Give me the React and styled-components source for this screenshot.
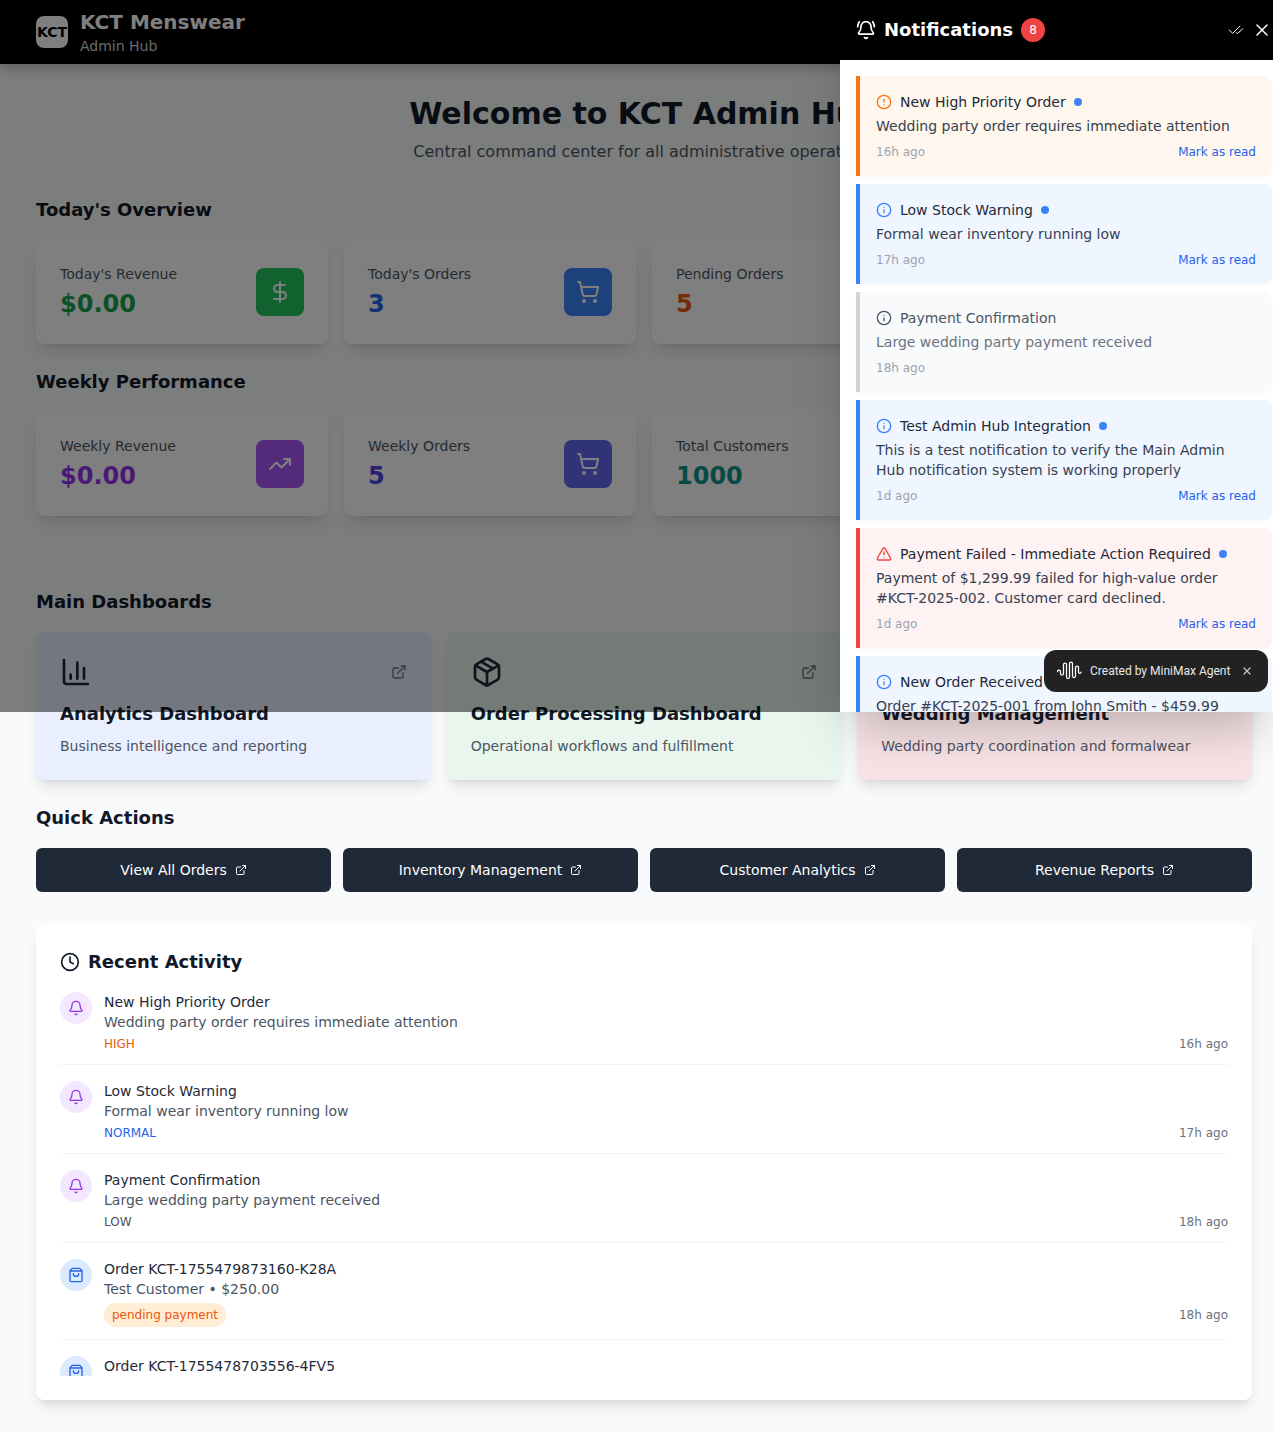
import React from 'react'
import styled, { createGlobalStyle } from 'styled-components'
import {
  Bell,
  BellRing,
  ChartColumn,
  CheckCheck,
  CircleAlert,
  Clock,
  DollarSign,
  ExternalLink,
  Heart,
  Info,
  Package,
  ShoppingBag,
  ShoppingCart,
  TrendingUp,
  TriangleAlert,
  X,
} from 'lucide-react'

const GlobalStyle = createGlobalStyle`
  html, body {
    margin: 0;
    padding: 0;
    background: #f9fafb;
    font-family: "DejaVu Sans", sans-serif;
  }
  * { box-sizing: border-box; }
`

const Page = styled.div`
  position: relative;
  width: 1273px;
  height: 1432px;
  overflow: hidden;
  background: #f9fafb;
`
const Header = styled.header`
  height: 64px;
  padding: 8px 36px;
  background: #000000;
  display: flex;
  align-items: center;
  gap: 12px;
  box-shadow: 0 4px 12px rgba(0, 0, 0, 0.25);
`
const Logo = styled.div`
  width: 32px;
  height: 32px;
  border-radius: 8px;
  background: #ffffff;
  color: #000000;
  font-size: 14px;
  font-weight: 700;
  display: flex;
  align-items: center;
  justify-content: center;
`
const Brand = styled.div`
  color: #ffffff;
  font-size: 20px;
  line-height: 28px;
  font-weight: 700;
`
const BrandSub = styled.div`
  color: #d1d5db;
  font-size: 14px;
  line-height: 20px;
`
const Main = styled.main`
  padding: 32px 21px 32px 36px;
`
const Hero = styled.div`
  text-align: center;
  margin-bottom: 32px;
`
const HeroTitle = styled.h1`
  margin: 0 0 8px;
  font-size: 30px;
  line-height: 36px;
  font-weight: 700;
  color: #111827;
`
const HeroSub = styled.p`
  margin: 0;
  font-size: 16px;
  line-height: 24px;
  color: #4b5563;
`
const SectionTitle = styled.h2`
  margin: 0 0 16px;
  font-size: 18px;
  line-height: 28px;
  font-weight: 700;
  color: #111827;
`
const StatGrid = styled.div`
  display: grid;
  grid-template-columns: repeat(4, 1fr);
  gap: 16px;
  margin-bottom: ${p => p.$bottom}px;
`
const StatCard = styled.div`
  height: 104px;
  padding: 24px;
  border-radius: 8px;
  background: #ffffff;
  box-shadow: 0 10px 15px -3px rgba(0, 0, 0, 0.1), 0 4px 6px -4px rgba(0, 0, 0, 0.1);
  display: flex;
  justify-content: space-between;
  align-items: center;
`
const StatLabel = styled.div`
  font-size: 14px;
  line-height: 20px;
  color: #4b5563;
`
const StatValue = styled.div`
  margin-top: 4px;
  font-size: 24px;
  line-height: 32px;
  font-weight: 700;
  color: ${p => p.$color};
`
const StatIcon = styled.div`
  width: 48px;
  height: 48px;
  border-radius: 8px;
  background: ${p => p.$bg};
  color: #ffffff;
  display: flex;
  align-items: center;
  justify-content: center;
`
const DashGrid = styled.div`
  display: grid;
  grid-template-columns: repeat(3, 1fr);
  gap: 16px;
  margin-bottom: 24px;
`
const DashCard = styled.div`
  height: 148px;
  padding: 24px;
  border-radius: 8px;
  background: ${p => p.$bg};
  box-shadow: 0 10px 15px -3px rgba(0, 0, 0, 0.1), 0 4px 6px -4px rgba(0, 0, 0, 0.1);
`
const DashTop = styled.div`
  display: flex;
  justify-content: space-between;
  align-items: center;
  margin-bottom: 12px;
  color: #1f2937;
`
const DashLink = styled.span`
  display: flex;
  color: #6b7280;
`
const DashTitle = styled.h3`
  margin: 0 0 8px;
  font-size: 18px;
  line-height: 28px;
  font-weight: 700;
  color: #111827;
`
const DashText = styled.p`
  margin: 0;
  font-size: 14px;
  line-height: 20px;
  color: #4b5563;
`
const ActionGrid = styled.div`
  display: grid;
  grid-template-columns: repeat(4, 1fr);
  gap: 12px;
  margin-bottom: 32px;
`
const ActionButton = styled.button`
  height: 44px;
  border: 0;
  border-radius: 6px;
  background: #1f2937;
  color: #ffffff;
  font-family: inherit;
  font-size: 14px;
  display: flex;
  align-items: center;
  justify-content: center;
  gap: 8px;
`
const ActivityCard = styled.section`
  height: 476px;
  padding: 24px;
  border-radius: 8px;
  background: #ffffff;
  box-shadow: 0 10px 15px -3px rgba(0, 0, 0, 0.1), 0 4px 6px -4px rgba(0, 0, 0, 0.1);
`
const ActivityHeading = styled.h2`
  margin: 0 0 16px;
  font-size: 18px;
  line-height: 28px;
  font-weight: 700;
  color: #111827;
  display: flex;
  align-items: center;
  gap: 8px;
`
const ActivityList = styled.div`
  height: 384px;
  overflow: hidden;
`
const ActivityRow = styled.div`
  display: flex;
  gap: 12px;
  padding-bottom: 12px;
  margin-bottom: 16px;
  border-bottom: 1px solid #f3f4f6;
`
const ActivityBubble = styled.div`
  flex: none;
  width: 32px;
  height: 32px;
  border-radius: 50%;
  background: ${p => p.$bg};
  color: ${p => p.$color};
  display: flex;
  align-items: center;
  justify-content: center;
`
const ActivityBody = styled.div`
  flex: 1;
`
const ActivityTitle = styled.div`
  font-size: 14px;
  line-height: 20px;
  color: #1f2937;
`
const ActivityText = styled.div`
  font-size: 14px;
  line-height: 20px;
  color: #4b5563;
`
const ActivityMeta = styled.div`
  margin-top: 4px;
  display: flex;
  justify-content: space-between;
  align-items: center;
  font-size: 12px;
  line-height: 16px;
`
const Priority = styled.span`
  color: ${p => p.$color};
`
const StatusPill = styled.span`
  padding: 4px 8px;
  border-radius: 12px;
  background: #ffedd5;
  color: #ea580c;
`
const TimeText = styled.span`
  color: #6b7280;
`
const Overlay = styled.div`
  position: absolute;
  top: 0;
  left: 0;
  right: 0;
  height: 712px;
  background: rgba(0, 0, 0, 0.5);
`
const Panel = styled.aside`
  position: absolute;
  top: 0;
  right: 0;
  width: 433px;
  height: 712px;
  background: #ffffff;
  box-shadow: 0 25px 50px -12px rgba(0, 0, 0, 0.25);
  display: flex;
  flex-direction: column;
`
const PanelHeader = styled.div`
  flex: none;
  height: 60px;
  padding: 0 1px 0 16px;
  background: #000000;
  color: #ffffff;
  display: flex;
  align-items: center;
  justify-content: space-between;
`
const PanelTitle = styled.div`
  display: flex;
  align-items: center;
  gap: 8px;
  font-size: 18px;
  line-height: 28px;
  font-weight: 700;
`
const CountBadge = styled.span`
  width: 24px;
  height: 24px;
  border-radius: 50%;
  background: #ef4444;
  font-size: 12px;
  font-weight: 400;
  display: flex;
  align-items: center;
  justify-content: center;
`
const PanelTools = styled.div`
  display: flex;
  align-items: center;
  gap: 8px;
`
const PanelList = styled.div`
  flex: 1;
  min-height: 0;
  overflow: hidden;
  padding: 16px 0 0 16px;
  display: flex;
  flex-direction: column;
  gap: 8px;
`
const Notice = styled.div`
  flex: none;
  width: 416px;
  padding: 16px;
  border-left: 4px solid ${p => p.$accent};
  border-radius: 0 8px 8px 0;
  background: ${p => p.$bg};
  box-shadow: 0 1px 2px rgba(0, 0, 0, 0.03);
`
const NoticeHead = styled.div`
  display: flex;
  align-items: center;
  gap: 8px;
  margin-bottom: 4px;
  color: ${p => p.$color};
`
const NoticeTitle = styled.span`
  font-size: 14px;
  line-height: 20px;
  color: ${p => (p.$read ? '#4b5563' : '#1f2937')};
`
const UnreadDot = styled.span`
  width: 8px;
  height: 8px;
  border-radius: 50%;
  background: #3b82f6;
`
const NoticeText = styled.p`
  margin: 0 0 8px;
  font-size: 14px;
  line-height: 20px;
  color: ${p => (p.$read ? '#6b7280' : '#374151')};
`
const NoticeFoot = styled.div`
  display: flex;
  justify-content: space-between;
  align-items: center;
  font-size: 12px;
  line-height: 16px;
`
const NoticeTime = styled.span`
  color: #9ca3af;
`
const MarkRead = styled.span`
  color: #2563eb;
`
const AgentBadge = styled.div`
  position: absolute;
  top: 650px;
  left: 1044px;
  width: 224px;
  height: 42px;
  padding: 0 15px 0 13px;
  border-radius: 12px;
  background: #222222;
  color: #ffffff;
  font-family: Roboto, sans-serif;
  font-size: 12px;
  display: flex;
  align-items: center;
`
const AgentLabel = styled.span`
  margin-left: 8px;
  flex: 1;
  color: #e8e8e8;
`
const AgentClose = styled.span`
  display: flex;
  color: #c4c4c4;
`

const todayStats = [
  { label: "Today's Revenue", value: '$0.00', color: '#16a34a', bg: '#22c55e', Icon: DollarSign },
  { label: "Today's Orders", value: '3', color: '#2563eb', bg: '#3b82f6', Icon: ShoppingCart },
  { label: 'Pending Orders', value: '5', color: '#ea580c', bg: '#f97316', Icon: Clock },
]

const weekStats = [
  { label: 'Weekly Revenue', value: '$0.00', color: '#9333ea', bg: '#a855f7', Icon: TrendingUp },
  { label: 'Weekly Orders', value: '5', color: '#4f46e5', bg: '#6366f1', Icon: ShoppingCart },
  { label: 'Total Customers', value: '1000', color: '#0d9488', bg: '#14b8a6', Icon: Heart },
]

const dashboards = [
  { title: 'Analytics Dashboard', text: 'Business intelligence and reporting', bg: '#e9effe', Icon: ChartColumn },
  { title: 'Order Processing Dashboard', text: 'Operational workflows and fulfillment', bg: '#e8f6ee', Icon: Package },
  { title: 'Wedding Management', text: 'Wedding party coordination and formalwear', bg: '#f8e3e6', Icon: Heart },
]

const actions = ['View All Orders', 'Inventory Management', 'Customer Analytics', 'Revenue Reports']

const activity = [
  { title: 'New High Priority Order', text: 'Wedding party order requires immediate attention', tag: 'HIGH', tagColor: '#ea580c', time: '16h ago' },
  { title: 'Low Stock Warning', text: 'Formal wear inventory running low', tag: 'NORMAL', tagColor: '#2563eb', time: '17h ago' },
  { title: 'Payment Confirmation', text: 'Large wedding party payment received', tag: 'LOW', tagColor: '#4b5563', time: '18h ago' },
]

const notices = [
  { title: 'New High Priority Order', text: 'Wedding party order requires immediate attention', time: '16h ago', accent: '#f97316', bg: '#fff7ed', iconColor: '#f97316', Icon: CircleAlert },
  { title: 'Low Stock Warning', text: 'Formal wear inventory running low', time: '17h ago', accent: '#3b82f6', bg: '#eff6ff', iconColor: '#3b82f6', Icon: Info },
  { title: 'Payment Confirmation', text: 'Large wedding party payment received', time: '18h ago', accent: '#d1d5db', bg: '#f9fafb', iconColor: '#4b5563', Icon: Info, read: true },
  { title: 'Test Admin Hub Integration', text: 'This is a test notification to verify the Main Admin Hub notification system is working properly', time: '1d ago', accent: '#3b82f6', bg: '#eff6ff', iconColor: '#3b82f6', Icon: Info },
  { title: 'Payment Failed - Immediate Action Required', text: 'Payment of $1,299.99 failed for high-value order #KCT-2025-002. Customer card declined.', time: '1d ago', accent: '#ef4444', bg: '#fef2f2', iconColor: '#ef4444', Icon: TriangleAlert },
  { title: 'New Order Received', text: 'Order #KCT-2025-001 from John Smith - $459.99', time: '1d ago', accent: '#3b82f6', bg: '#eff6ff', iconColor: '#3b82f6', Icon: Info },
]

const WaveIcon = () => (
  <svg width="25" height="22" viewBox="0 0 25 22" fill="none" stroke="currentColor" strokeWidth="1.25" strokeLinecap="round">
    <path d="M.5 11.500c0-2 3-2 3 0v2c0 2 3 2 3 0V4.500c0-2 3-2 3 0V17c0 2 3 2 3 0V3.500c0-2 3-2 3 0V16c0 2 3 2 3 0V7.500c0-2 3-2 3 0v4.500c0 1.800 2.500 1.800 2.500 0" />
  </svg>
)

const Stats = ({ items, bottom }) => (
  <StatGrid $bottom={bottom}>
    {items.map(({ label, value, color, bg, Icon }) => (
      <StatCard key={label}>
        <div>
          <StatLabel>{label}</StatLabel>
          <StatValue $color={color}>{value}</StatValue>
        </div>
        <StatIcon $bg={bg}><Icon size={24} /></StatIcon>
      </StatCard>
    ))}
  </StatGrid>
)

const App = () => (
  <Page>
    <GlobalStyle />
    <Header>
      <Logo>KCT</Logo>
      <div>
        <Brand>KCT Menswear</Brand>
        <BrandSub>Admin Hub</BrandSub>
      </div>
    </Header>
    <Main>
      <Hero>
        <HeroTitle>Welcome to KCT Admin Hub</HeroTitle>
        <HeroSub>Central command center for all administrative operations</HeroSub>
      </Hero>
      <SectionTitle>Today's Overview</SectionTitle>
      <Stats items={todayStats} bottom={24} />
      <SectionTitle>Weekly Performance</SectionTitle>
      <Stats items={weekStats} bottom={72} />
      <SectionTitle>Main Dashboards</SectionTitle>
      <DashGrid>
        {dashboards.map(({ title, text, bg, Icon }) => (
          <DashCard key={title} $bg={bg}>
            <DashTop>
              <Icon size={32} />
              <DashLink><ExternalLink size={16} /></DashLink>
            </DashTop>
            <DashTitle>{title}</DashTitle>
            <DashText>{text}</DashText>
          </DashCard>
        ))}
      </DashGrid>
      <SectionTitle>Quick Actions</SectionTitle>
      <ActionGrid>
        {actions.map(label => (
          <ActionButton key={label}>
            {label}
            <ExternalLink size={12} />
          </ActionButton>
        ))}
      </ActionGrid>
      <ActivityCard>
        <ActivityHeading>
          <Clock size={20} />
          Recent Activity
        </ActivityHeading>
        <ActivityList>
          {activity.map(item => (
            <ActivityRow key={item.title}>
              <ActivityBubble $bg="#f3e8ff" $color="#9333ea"><Bell size={16} /></ActivityBubble>
              <ActivityBody>
                <ActivityTitle>{item.title}</ActivityTitle>
                <ActivityText>{item.text}</ActivityText>
                <ActivityMeta>
                  <Priority $color={item.tagColor}>{item.tag}</Priority>
                  <TimeText>{item.time}</TimeText>
                </ActivityMeta>
              </ActivityBody>
            </ActivityRow>
          ))}
          <ActivityRow>
            <ActivityBubble $bg="#dbeafe" $color="#2563eb"><ShoppingBag size={16} /></ActivityBubble>
            <ActivityBody>
              <ActivityTitle>Order KCT-1755479873160-K28A</ActivityTitle>
              <ActivityText>Test Customer • $250.00</ActivityText>
              <ActivityMeta>
                <StatusPill>pending payment</StatusPill>
                <TimeText>18h ago</TimeText>
              </ActivityMeta>
            </ActivityBody>
          </ActivityRow>
          <ActivityRow>
            <ActivityBubble $bg="#dbeafe" $color="#2563eb"><ShoppingBag size={16} /></ActivityBubble>
            <ActivityBody>
              <ActivityTitle>Order KCT-1755478703556-4FV5</ActivityTitle>
            </ActivityBody>
          </ActivityRow>
        </ActivityList>
      </ActivityCard>
    </Main>
    <Overlay />
    <Panel>
      <PanelHeader>
        <PanelTitle>
          <BellRing size={20} />
          Notifications
          <CountBadge>8</CountBadge>
        </PanelTitle>
        <PanelTools>
          <CheckCheck size={16} strokeWidth={1.5} />
          <X size={20} strokeWidth={1.75} />
        </PanelTools>
      </PanelHeader>
      <PanelList>
        {notices.map(({ title, text, time, accent, bg, iconColor, Icon, read }) => (
          <Notice key={title} $accent={accent} $bg={bg}>
            <NoticeHead $color={iconColor}>
              <Icon size={16} />
              <NoticeTitle $read={read}>{title}</NoticeTitle>
              {!read && <UnreadDot />}
            </NoticeHead>
            <NoticeText $read={read}>{text}</NoticeText>
            <NoticeFoot>
              <NoticeTime>{time}</NoticeTime>
              {!read && <MarkRead>Mark as read</MarkRead>}
            </NoticeFoot>
          </Notice>
        ))}
      </PanelList>
    </Panel>
    <AgentBadge>
      <WaveIcon />
      <AgentLabel>Created by MiniMax Agent</AgentLabel>
      <AgentClose><X size={12} strokeWidth={2.5} /></AgentClose>
    </AgentBadge>
  </Page>
)

export default App
